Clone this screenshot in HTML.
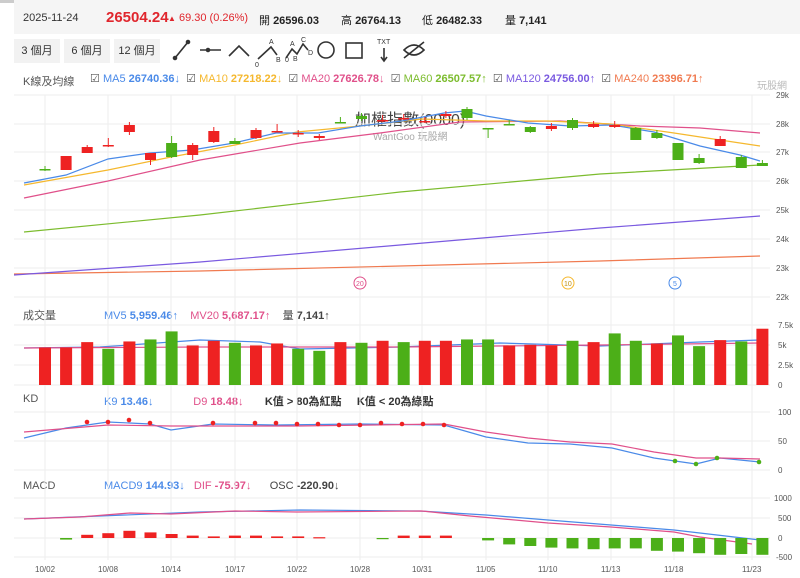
<!DOCTYPE html>
<html><head><meta charset="utf-8"><style>
body{margin:0;width:800px;height:578px;background:#fff;font-family:"Liberation Sans","Noto Sans CJK TC",sans-serif;overflow:hidden;position:relative}
.top{position:absolute;left:0;top:0;width:800px;height:3px;background:#ccc}
.hdr{position:absolute;left:14px;top:0;height:34px;width:786px;background:#f5f5f5}
.t{position:absolute;white-space:nowrap;font-size:11px}
.btn{position:absolute;top:39px;height:24px;background:#f2f2f2;font-size:11px;color:#333;line-height:24px;text-align:center}
svg{position:absolute;left:0;top:0}
</style></head><body>
<div class="top"></div>
<div class="hdr"></div>
<div class="t" style="left:23px;top:12px;color:#333">2025-11-24</div>
<div class="t" style="left:106px;top:9px;color:#e0262d;font-size:15px;font-weight:bold">26504.24</div>
<div class="t" style="left:168px;top:12px;color:#e0262d"><span style="font-size:8px">▲</span> 69.30 (0.26%)</div>
<div class="t" style="left:259px;top:12px;color:#222">開 <b>26596.03</b></div>
<div class="t" style="left:341px;top:12px;color:#222">高 <b>26764.13</b></div>
<div class="t" style="left:422px;top:12px;color:#222">低 <b>26482.33</b></div>
<div class="t" style="left:505px;top:12px;color:#222">量 <b>7,141</b></div>
<div class="btn" style="left:14px;width:46px">3 個月</div>
<div class="btn" style="left:64px;width:46px">6 個月</div>
<div class="btn" style="left:114px;width:46px">12 個月</div>
<div class="t" style="left:23px;top:73px;color:#555">K線及均線</div>
<div class="t" style="left:90px;top:72px;font-size:11px"><span style="color:#555">☑</span> <span style="color:#4a8ae8">MA5 <b>26740.36</b>↓</span>&nbsp; <span style="color:#555">☑</span> <span style="color:#f5b82e">MA10 <b>27218.22</b>↓</span>&nbsp; <span style="color:#555">☑</span> <span style="color:#e0508a">MA20 <b>27626.78</b>↓</span>&nbsp; <span style="color:#555">☑</span> <span style="color:#7cbc2e">MA60 <b>26507.57</b>↑</span>&nbsp; <span style="color:#555">☑</span> <span style="color:#7a5ae0">MA120 <b>24756.00</b>↑</span>&nbsp; <span style="color:#555">☑</span> <span style="color:#f07a50">MA240 <b>23396.71</b>↑</span></div>
<div class="t" style="left:757px;top:77px;color:#bbb;font-size:10px">玩股網</div>
<div class="t" style="left:355px;top:106px;color:#444;font-size:16px">加權指數(0000)</div>
<div class="t" style="left:373px;top:128px;color:#aaa;font-size:10px">WantGoo 玩股網</div>
<div class="t" style="left:23px;top:307px;color:#555">成交量</div>
<div class="t" style="left:104px;top:307px"><span style="color:#4a8ae8">MV5 <b>5,959.46</b>↑</span>&nbsp;&nbsp;&nbsp; <span style="color:#e0508a">MV20 <b>5,687.17</b>↑</span>&nbsp;&nbsp;&nbsp; <span style="color:#444">量 <b>7,141</b>↑</span></div>
<div class="t" style="left:23px;top:393px;color:#555">KD</div>
<div class="t" style="left:104px;top:393px"><span style="color:#4a8ae8">K9 <b>13.46</b>↓</span>&nbsp;&nbsp;&nbsp;&nbsp;&nbsp;&nbsp;&nbsp;&nbsp;&nbsp;&nbsp;&nbsp;&nbsp; <span style="color:#e0508a">D9 <b>18.48</b>↓</span>&nbsp;&nbsp;&nbsp;&nbsp;&nbsp;&nbsp; <span style="color:#333"><b>K值 &gt; 80為紅點</b></span>&nbsp;&nbsp;&nbsp;&nbsp; <span style="color:#333"><b>K值 &lt; 20為綠點</b></span></div>
<div class="t" style="left:23px;top:480px;color:#555">MACD</div>
<div class="t" style="left:104px;top:480px"><span style="color:#4a8ae8">MACD9 <b>144.93</b>↓</span>&nbsp;&nbsp; <span style="color:#e0508a">DIF <b>-75.97</b>↓</span>&nbsp;&nbsp;&nbsp;&nbsp;&nbsp; <span style="color:#444">OSC <b>-220.90</b>↓</span></div>
<svg id="s" width="800" height="578" xmlns="http://www.w3.org/2000/svg" font-family="Liberation Sans" font-size="8" fill="#666">
<g stroke="#333" stroke-width="1.6" fill="none">
<path d="M175 58L188 42"/><circle cx="175" cy="58" r="1.5" fill="#333"/><circle cx="188" cy="42" r="1.5" fill="#333"/>
<path d="M200 50H221"/><circle cx="208" cy="50" r="1.5" fill="#333"/>
<path d="M229 56L239 46L249 56"/>
<path d="M258 59L271 47L277 55"/><path d="M286 58L292 49L297 54L303 44L308 50"/>
<circle cx="326" cy="50" r="8"/><rect x="346" y="43" width="16" height="15"/>
<path d="M384 48V60M381 57L384 61L387 57"/>
<path d="M404 50Q414 40 424 50Q414 60 404 50ZM404 58L424 42"/>
</g>
<g fill="#333" font-size="7"><text x="269" y="44">A</text><text x="255" y="67">0</text><text x="276" y="62">B</text><text x="290" y="46">A</text><text x="301" y="42">C</text><text x="285" y="62">0</text><text x="293" y="61">B</text><text x="308" y="55">D</text><text x="377" y="44">TXT</text></g>
<g stroke="#eee" stroke-width="1"><path d="M14 95H770M14 124H770M14 152H770M14 181H770M14 210H770M14 239H770M14 268H770M14 297H770M14 325H770M14 345H770M14 365H770M14 385H770M14 412H770M14 441H770M14 470H770M14 498H770M14 518H770M14 538H770M14 557H770"/>
<path d="M45 95V560M108 95V560M171 95V560M235 95V560M297 95V560M360 95V560M422 95V560M486 95V560M548 95V560M611 95V560M674 95V560M752 95V560"/></g>
<g font-size="8" fill="#555"><text x="776" y="98">29k</text><text x="776" y="127">28k</text><text x="776" y="155">27k</text><text x="776" y="184">26k</text><text x="776" y="213">25k</text><text x="776" y="242">24k</text><text x="776" y="271">23k</text><text x="776" y="300">22k</text>
<text x="778" y="328">7.5k</text><text x="778" y="348">5k</text><text x="778" y="368">2.5k</text><text x="778" y="388">0</text>
<text x="778" y="415">100</text><text x="778" y="444">50</text><text x="778" y="473">0</text>
<text x="774" y="501">1000</text><text x="778" y="521">500</text><text x="778" y="541">0</text><text x="776" y="560">-500</text>
<text x="35" y="572">10/02</text><text x="98" y="572">10/08</text><text x="161" y="572">10/14</text><text x="225" y="572">10/17</text><text x="287" y="572">10/22</text><text x="350" y="572">10/28</text><text x="412" y="572">10/31</text><text x="476" y="572">11/05</text><text x="538" y="572">11/10</text><text x="601" y="572">11/13</text><text x="664" y="572">11/18</text><text x="742" y="572">11/23</text></g>
<g fill="none" stroke-width="1.2">
<path stroke="#f07a50" d="M14 274L200 271L400 266L600 261L760 256"/>
<path stroke="#7a5ae0" d="M14 275L200 262L400 245L600 228L760 216"/>
<path stroke="#7cbc2e" d="M24 232L200 215L400 192L600 174L760 165"/>
<path stroke="#e0508a" d="M24 198L108 181L200 160L300 143L380 133L460 122L560 121L640 126L700 128L760 133"/>
<path stroke="#f5b82e" d="M24 185L108 170L171 157L235 145L297 132L360 126L422 119L486 121L548 121L611 124L674 133L720 140L760 146"/>
<path stroke="#4a8ae8" d="M24 183L66 175L108 159L150 153L192 150L234 143L276 133L318 133L360 126L402 121L444 113L465 111L486 116L528 123L570 126L612 125L654 132L700 146L740 155L760 161"/>
<path stroke="#4a8ae8" d="M24 348L100 347L200 340L260 342L300 349L400 347L500 343L600 346L700 342L760 340"/>
<path stroke="#e0508a" d="M24 348L200 347L400 347L600 345L760 343"/>
<path stroke="#4a8ae8" d="M24 438L66 428L108 422L150 424L171 430L213 424L276 425L360 424L444 425L486 437L528 443L570 444L612 448L654 458L696 464L720 458L760 462"/>
<path stroke="#e0508a" d="M24 432L108 425L171 426L297 426L444 424L486 432L528 438L570 442L612 444L654 452L696 458L720 458L760 459"/>
<path stroke="#4a8ae8" d="M24 519L100 516L200 512L300 510L420 511L486 515L548 520L611 525L674 530L760 540"/>
<path stroke="#e0508a" d="M24 519L80 517L130 513L171 514L235 511L297 512L422 511L470 516L548 523L611 527L674 532L700 537L752 544"/>
</g>
<g id="c"></g>
<g stroke="#999" fill="#fff" stroke-width="1" font-size="7"><circle cx="360" cy="283" r="6" stroke="#e0508a"/><circle cx="568" cy="283" r="6" stroke="#f5b82e"/><circle cx="675" cy="283" r="6" stroke="#4a8ae8"/></g>
<g font-size="7"><text x="356" y="286" fill="#e0508a">20</text><text x="564" y="286" fill="#c09010">10</text><text x="673" y="286" fill="#4a8ae8">5</text></g>
</svg>
<script>
var R='#e22',G='#4caf18',g=document.getElementById('c'),h='';
var cd=[[169,169,166,171,G],[156,170,156,170,R],[147,153,145,153,R],[145,146,138,147,R],[125,132,122,135,R],[153,160,153,165,R],[143,157,136,158,G],[145,155,143,160,R],[131,142,127,143,R],[141,144,138,144,G],[130,138,128,139,R],[131,131,124,131,R],[133,134,130,137,R],[136,138,134,140,R],[122,123,117,123,G],[116,119,113,121,G],[120,121,115,122,R],[118,119,114,120,R],[121,122,117,123,R],[114,116,111,118,R],[109,118,107,120,G],[128,129,128,138,G],[124,125,120,125,G],[127,132,126,133,G],[126,129,123,131,R],[120,128,118,130,G],[124,127,121,128,R],[125,127,121,128,R],[128,140,127,140,G],[133,138,130,139,G],[143,160,143,160,G],[158,163,154,164,G],[139,146,136,146,R],[157,168,155,168,G],[163,166,160,166,G]];
var vol=[5.6,5.6,6.4,5.4,6.5,6.8,8.0,5.9,6.6,6.3,5.9,6.2,5.4,5.1,6.4,6.3,6.6,6.4,6.6,6.6,6.8,6.8,5.9,6.0,5.9,6.6,6.4,7.7,6.6,6.2,7.4,5.8,6.7,6.5,8.4];
var vcol='RRRGRGGRRGRRGGRGRGRRGGRRRGRGGRGGRGR';
var macd=[0,-2,4,6,9,7,5,3,2,3,3,2,2,1,0,0,-1,3,3,3,0,-3,-8,-10,-12,-13,-14,-13,-13,-16,-17,-19,-21,-20,-21];
for(var i=0;i<35;i++){var x=45+i*21.1,c=cd[i],col=c[4];
h+='<line x1="'+x+'" x2="'+x+'" y1="'+c[2]+'" y2="'+c[3]+'" stroke="'+col+'"/>';
var t=Math.min(c[0],c[1]),b=Math.max(c[0],c[1]);h+='<rect x="'+(x-5.5)+'" y="'+t+'" width="11" height="'+Math.max(1.5,b-t)+'" fill="'+col+'"/>';
var vc=vcol[i]=='R'?R:G;
var vh=vol[i]*6.7;h+='<rect x="'+(x-6)+'" y="'+(385-vh)+'" width="12" height="'+vh+'" fill="'+vc+'"/>';
var m=macd[i];if(m!=0)h+='<rect x="'+(x-6)+'" y="'+(m>0?538-m*0.8:538)+'" width="12" height="'+Math.max(1.2,Math.abs(m)*0.8)+'" fill="'+(m>0?R:G)+'"/>';}
var rd=[[87,422],[108,422],[129,420],[150,423],[213,423],[255,423],[276,423],[297,424],[318,424],[339,425],[360,425],[381,423],[402,424],[423,424],[444,425]];
rd.forEach(function(p){h+='<circle cx="'+p[0]+'" cy="'+p[1]+'" r="2.3" fill="#e22"/>'});
[[675,461],[696,464],[717,458],[759,462]].forEach(function(p){h+='<circle cx="'+p[0]+'" cy="'+p[1]+'" r="2.3" fill="#4caf18"/>'});
g.innerHTML=h;
</script>
</body></html>
